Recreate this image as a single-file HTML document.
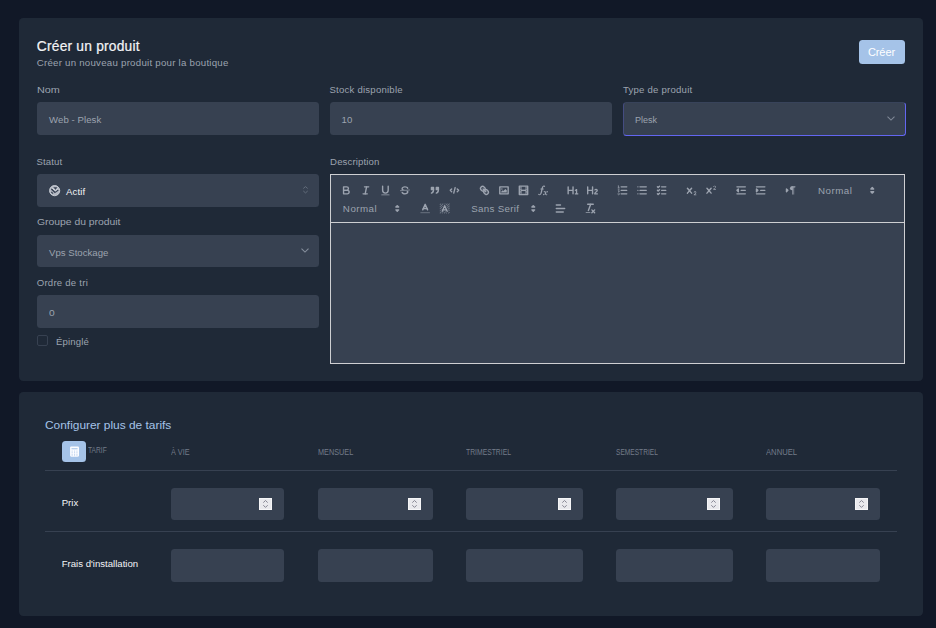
<!DOCTYPE html>
<html lang="fr">
<head>
<meta charset="utf-8">
<title>Créer un produit</title>
<style>
*{box-sizing:border-box;margin:0;padding:0}
html,body{width:936px;height:628px;overflow:hidden;background:#111827;font-family:"Liberation Sans",sans-serif;}
body{position:relative}
.card{position:absolute;background:#1f2937;border-radius:4.2px}
.inp{position:absolute;background:#374151;border-radius:3.5px}
.t{position:absolute;white-space:nowrap;line-height:1;font-family:"Liberation Sans",sans-serif}
.lbl{color:#9ca3af;font-size:10px}
.val{color:#9ca3af;font-size:10px}
.th{color:#6b7280;font-size:8.2px}
.hl{position:absolute;height:1px;background:#374151}
.spin{position:absolute;width:13px;height:12px;background:#e9e9ed;border:1px solid #f5f5f7}
svg{position:absolute;overflow:visible}
</style>
</head>
<body>

<!-- CARD 1 -->
<div class="card" style="left:19px;top:18px;width:904px;height:363px"></div>


<div class="inp" style="left:859px;top:40px;width:46px;height:24px;background:#a5c3e8"></div>

<!-- row 1 -->
<div class="inp" style="left:37px;top:102px;width:282px;height:33px"></div>

<div class="inp" style="left:330px;top:102px;width:282px;height:33px"></div>

<div class="inp" style="left:623px;top:102px;width:283px;height:34px;border:1px solid #6366f1;border-top-color:rgba(99,102,241,.06);border-left-color:rgba(99,102,241,.3)"></div>
<svg style="left:887.3px;top:116px" width="8" height="5" viewBox="0 0 8 5"><path d="M0.5 0.7 L4 4.1 L7.5 0.7" fill="none" stroke="#7f8896" stroke-width="1.1"/></svg>

<!-- left column -->
<div class="inp" style="left:37px;top:174px;width:282px;height:33px"></div>
<svg style="left:48.9px;top:184.9px" width="11.3" height="11.3" viewBox="0 0 11.3 11.3"><circle cx="5.65" cy="5.65" r="5.1" fill="#b4b9c3" stroke="#cdd1d8" stroke-width="0.9"/><path d="M4.2 2.3 L8.3 2.3 L6.6 4.7 Z" fill="#3a4455"/><path d="M2.4 3.9 L5.9 7.3 L9.3 5.0" fill="none" stroke="#3a4455" stroke-width="1.5"/><path d="M2.3 6.9 L4 8.7" fill="none" stroke="#3a4455" stroke-width="1.2"/><path d="M3.3 3.2 L6.6 5.8 L8.7 3.8" fill="none" stroke="#e2e5ea" stroke-width="1"/></svg>
<svg style="left:303.2px;top:186.2px" width="5" height="8" viewBox="0 0 5 8"><path d="M0.3 2.5 L2.5 0.6 L4.7 2.5 M0.3 5.0 L2.5 6.9 L4.7 5.0" fill="none" stroke="#66707f" stroke-width="0.9"/></svg>

<div class="inp" style="left:37px;top:235px;width:282px;height:32px"></div>
<svg style="left:301px;top:248.1px" width="8" height="5" viewBox="0 0 8 5"><path d="M0.5 0.7 L4 4.1 L7.5 0.7" fill="none" stroke="#858e9c" stroke-width="1.1"/></svg>

<div class="inp" style="left:37px;top:295px;width:282px;height:33px"></div>

<div style="position:absolute;left:37px;top:335px;width:11px;height:11px;border:1px solid #374151;border-radius:2px;background:#1f2937"></div>

<!-- description -->
<div id="qlbox" style="position:absolute;left:330px;top:174px;width:575px;height:190px;background:#374151;border:1px solid #cecfd2"></div>
<div style="position:absolute;left:330px;top:222px;width:575px;height:1px;background:#cecfd2"></div>

<!-- QUILL TOOLBAR -->
<style>
#ql{position:absolute;left:331.05px;top:175.05px;width:824px;height:67px;transform:scale(.6975);transform-origin:0 0;padding:10px 8px 0 8px;font-family:"Liberation Sans",sans-serif}
#ql .f{display:block;float:left;margin-right:15px;height:24px;margin-bottom:2px}
#ql .b{float:left;width:28px;height:24px;padding:3px 5px;position:relative}
#ql .b svg{position:static;float:left;height:18px;width:18px;overflow:hidden}
#ql .s{fill:none;stroke:#9ca3af;stroke-width:2;stroke-linecap:round;stroke-linejoin:round}
#ql .s.n{stroke-width:1}
#ql .fl{fill:#9ca3af}
#ql .e{fill-rule:evenodd}
#ql .p{float:left;height:24px;position:relative;color:#9ca3af;font-size:14px;letter-spacing:.42px;font-weight:400;line-height:24px;padding-left:9px;border:0}
#ql .p span{position:relative;top:-.5px}
#ql .p svg{position:absolute;right:3px;top:3px;width:18px;height:18px;overflow:hidden}
#ql .pc{float:left;width:28px;height:24px;padding:3px 5px}
#ql .pc svg{position:static;float:left;width:18px;height:18px;overflow:hidden}
</style>
<div id="ql">
<span class="f">
<span class="b"><svg viewBox="0 0 18 18"><path class="s" d="M5,4H9.5A2.5,2.5,0,0,1,12,6.5v0A2.5,2.5,0,0,1,9.5,9H5A0,0,0,0,1,5,9V4A0,0,0,0,1,5,4Z"/><path class="s" d="M5,9h5.5A2.5,2.5,0,0,1,13,11.5v0A2.5,2.5,0,0,1,10.5,14H5a0,0,0,0,1,0,0V9A0,0,0,0,1,5,9Z"/></svg></span>
<span class="b"><svg viewBox="0 0 18 18"><line class="s" x1="7" x2="13" y1="4" y2="4"/><line class="s" x1="5" x2="11" y1="14" y2="14"/><line class="s" x1="8" x2="10" y1="14" y2="4"/></svg></span>
<span class="b"><svg viewBox="0 0 18 18"><path class="s" d="M5,3V9a4.012,4.012,0,0,0,4,4H9a4.012,4.012,0,0,0,4-4V3"/><rect class="fl" height="1" rx="0.5" ry="0.5" width="12" x="3" y="15"/></svg></span>
<span class="b"><svg viewBox="0 0 18 18"><line class="s n" x1="15.5" x2="2.5" y1="8.5" y2="9.5"/><path class="fl" d="M9.007,8C6.542,7.791,6,7.519,6,6.5,6,5.792,7.283,5,9,5c1.571,0,2.765.679,2.969,1.309a1,1,0,0,0,1.9-.617C13.356,4.106,11.354,3,9,3,6.2,3,4,4.538,4,6.5a3.2,3.2,0,0,0,.5,1.843Z"/><path class="fl" d="M8.984,10C11.457,10.208,12,10.479,12,11.5c0,0.708-1.283,1.5-3,1.5-1.571,0-2.765-.679-2.969-1.309a1,1,0,1,0-1.9.617C4.644,13.894,6.646,15,9,15c2.8,0,5-1.538,5-3.5a3.2,3.2,0,0,0-.5-1.843Z"/></svg></span>
</span><span class="f">
<span class="b"><svg viewBox="0 0 18 18"><rect class="fl s" height="3" width="3" x="4" y="5"/><rect class="fl s" height="3" width="3" x="11" y="5"/><path class="e fl s" d="M7,8c0,4.031-3,5-3,5"/><path class="e fl s" d="M14,8c0,4.031-3,5-3,5"/></svg></span>
<span class="b"><svg viewBox="0 0 18 18"><polyline class="e s" points="5 7 3 9 5 11"/><polyline class="e s" points="13 7 15 9 13 11"/><line class="s" x1="10" x2="8" y1="5" y2="13"/></svg></span>
</span><span class="f">
<span class="b"><svg viewBox="0 0 18 18"><line class="s" x1="7" x2="11" y1="7" y2="11"/><path class="e s" d="M8.9,4.577a3.476,3.476,0,0,1,.36,4.679A3.476,3.476,0,0,1,4.577,8.9C3.185,7.5,2.035,6.4,4.217,4.217S7.5,3.185,8.9,4.577Z"/><path class="e s" d="M13.423,9.1a3.476,3.476,0,0,0-4.679-.36,3.476,3.476,0,0,0,.36,4.679c1.392,1.392,2.5,2.542,4.679.36S14.815,10.5,13.423,9.1Z"/></svg></span>
<span class="b"><svg viewBox="0 0 18 18"><rect class="s" height="10" width="12" x="3" y="4"/><circle class="fl" cx="6" cy="7" r="1"/><polyline class="e fl" points="5 12 5 11 7 9 8 10 11 7 13 9 13 12 5 12"/></svg></span>
<span class="b"><svg viewBox="0 0 18 18"><rect class="s" height="12" width="12" x="3" y="3"/><rect class="fl" height="12" width="1" x="5" y="3"/><rect class="fl" height="12" width="1" x="12" y="3"/><rect class="fl" height="2" width="8" x="5" y="8"/><rect class="fl" height="1" width="3" x="3" y="5"/><rect class="fl" height="1" width="3" x="3" y="7"/><rect class="fl" height="1" width="3" x="3" y="10"/><rect class="fl" height="1" width="3" x="3" y="12"/><rect class="fl" height="1" width="3" x="12" y="5"/><rect class="fl" height="1" width="3" x="12" y="7"/><rect class="fl" height="1" width="3" x="12" y="10"/><rect class="fl" height="1" width="3" x="12" y="12"/></svg></span>
<span class="b"><svg viewBox="0 0 18 18"><path class="fl" d="M11.759,2.482a2.561,2.561,0,0,0-3.53.607A7.656,7.656,0,0,0,6.8,6.2C6.109,9.188,5.275,14.677,4.15,14.927a1.545,1.545,0,0,0-1.3-.933A0.922,0.922,0,0,0,2,15.036S1.954,16,4.119,16s3.091-2.691,3.7-5.553c0.177-.826.36-1.726,0.554-2.6L8.775,6.2c0.381-1.421.807-2.521,1.306-2.676a1.014,1.014,0,0,0,1.02.56A0.966,0.966,0,0,0,11.759,2.482Z"/><rect class="fl" height="1.6" rx="0.8" ry="0.8" width="5" x="5.15" y="6.2"/><path class="fl" d="M13.663,12.027a1.662,1.662,0,0,1,.266-0.276q0.193,0.069.456,0.138a2.1,2.1,0,0,0,.535.069,1.075,1.075,0,0,0,.767-0.3,1.044,1.044,0,0,0,.314-0.8,0.84,0.84,0,0,0-.238-0.619,0.8,0.8,0,0,0-.594-0.239,1.154,1.154,0,0,0-.781.3,4.607,4.607,0,0,0-.781,1q-0.091.15-.218,0.346l-0.246.38c-0.068-.288-0.137-0.582-0.212-0.885-0.459-1.847-2.494-.984-2.941-0.8-0.482.2-.353,0.647-0.094,0.529a0.869,0.869,0,0,1,1.281.585c0.217,0.751.377,1.436,0.527,2.038a5.688,5.688,0,0,1-.362.467,2.69,2.69,0,0,1-.264.271q-0.221-.08-0.471-0.147a2.029,2.029,0,0,0-.522-0.066,1.079,1.079,0,0,0-.768.3A1.058,1.058,0,0,0,9,15.131a0.82,0.82,0,0,0,.832.852,1.134,1.134,0,0,0,.787-0.3,5.11,5.11,0,0,0,.776-0.993q0.141-.219.215-0.34c0.046-.076.122-0.194,0.223-0.346a2.786,2.786,0,0,0,.918,1.726,2.582,2.582,0,0,0,2.376-.185c0.317-.181.212-0.565,0-0.494A0.807,0.807,0,0,1,14.176,15a5.159,5.159,0,0,1-.913-2.446l0,0Q13.487,12.24,13.663,12.027Z"/></svg></span>
</span><span class="f">
<span class="b"><svg viewBox="0 0 18 18"><path class="fl" d="M10,4V14a1,1,0,0,1-2,0V10H3v4a1,1,0,0,1-2,0V4A1,1,0,0,1,3,4V8H8V4a1,1,0,0,1,2,0Zm6.06787,9.209H14.98975V7.59863a.54085.54085,0,0,0-.605-.60547h-.62744a1.01119,1.01119,0,0,0-.748.29688L11.645,8.56641a.5435.5435,0,0,0-.022.8584l.28613.30762a.53861.53861,0,0,0,.84717.0332l.09912-.08789a1.2137,1.2137,0,0,0,.2417-.35254h.02246s-.01123.30859-.01123.60547V13.209H12.041a.54085.54085,0,0,0-.605.60547v.43945a.54085.54085,0,0,0,.605.60547h4.02686a.54085.54085,0,0,0,.605-.60547v-.43945A.54085.54085,0,0,0,16.06787,13.209Z"/></svg></span>
<span class="b"><svg viewBox="0 0 18 18"><path class="fl" d="M16.73975,13.81445v.43945a.54085.54085,0,0,1-.605.60547H11.855a.58392.58392,0,0,1-.64893-.60547V14.0127c0-2.90527,3.39941-3.42187,3.39941-4.55469a.77675.77675,0,0,0-.84717-.78125,1.17684,1.17684,0,0,0-.83594.38477c-.2749.26367-.561.374-.85791.13184l-.4292-.34082c-.30811-.24219-.38525-.51758-.1543-.81445a2.97155,2.97155,0,0,1,2.45361-1.17676,2.45393,2.45393,0,0,1,2.68408,2.40918c0,2.45312-3.1792,2.92676-3.27832,3.93848h2.79443A.54085.54085,0,0,1,16.73975,13.81445ZM9,3A.99974.99974,0,0,0,8,4V8H3V4A1,1,0,0,0,1,4V14a1,1,0,0,0,2,0V10H8v4a1,1,0,0,0,2,0V4A.99974.99974,0,0,0,9,3Z"/></svg></span>
</span><span class="f">
<span class="b"><svg viewBox="0 0 18 18"><line class="s" x1="7" x2="15" y1="4" y2="4"/><line class="s" x1="7" x2="15" y1="9" y2="9"/><line class="s" x1="7" x2="15" y1="14" y2="14"/><line class="s n" x1="2.5" x2="4.5" y1="5.5" y2="5.5"/><path class="fl" d="M3.5,6A0.5,0.5,0,0,1,3,5.5V3.085l-0.276.138A0.5,0.5,0,0,1,2.053,3c-0.124-.247-0.023-0.324.224-0.447l1-.5A0.5,0.5,0,0,1,4,2.5v3A0.5,0.5,0,0,1,3.5,6Z"/><path class="s n" d="M4.5,10.5h-2c0-.234,1.85-1.076,1.85-2.234A0.959,0.959,0,0,0,2.5,8.156"/><path class="s n" d="M2.5,14.846a0.959,0.959,0,0,0,1.85-.109A0.7,0.7,0,0,0,3.75,14a0.688,0.688,0,0,0,.6-0.736,0.959,0.959,0,0,0-1.85-.109"/></svg></span>
<span class="b"><svg viewBox="0 0 18 18"><line class="s" x1="6" x2="15" y1="4" y2="4"/><line class="s" x1="6" x2="15" y1="9" y2="9"/><line class="s" x1="6" x2="15" y1="14" y2="14"/><line class="s" x1="3" x2="3" y1="4" y2="4"/><line class="s" x1="3" x2="3" y1="9" y2="9"/><line class="s" x1="3" x2="3" y1="14" y2="14"/></svg></span>
<span class="b"><svg viewBox="0 0 18 18"><line class="s" x1="9" x2="15" y1="4" y2="4"/><polyline class="s" points="3 4 4 5 6 3"/><line class="s" x1="9" x2="15" y1="14" y2="14"/><polyline class="s" points="3 14 4 15 6 13"/><line class="s" x1="9" x2="15" y1="9" y2="9"/><polyline class="s" points="3 9 4 10 6 8"/></svg></span>
</span><span class="f">
<span class="b"><svg viewBox="0 0 18 18"><path class="fl" d="M15.5,15H13.861a3.858,3.858,0,0,0,1.914-2.975,1.8,1.8,0,0,0-1.6-1.751A1.921,1.921,0,0,0,12.021,11.7a0.50013,0.50013,0,1,0,.957.291h0a0.914,0.914,0,0,1,1.053-.725,0.81,0.81,0,0,1,.744.762c0,1.076-1.16971,1.86982-1.93971,2.43082A1.45639,1.45639,0,0,0,12,15.5a0.5,0.5,0,0,0,.5.5h3A0.5,0.5,0,0,0,15.5,15Z"/><path class="fl" d="M9.65,5.241a1,1,0,0,0-1.409.108L6,7.964,3.759,5.349A1,1,0,0,0,2.192,6.59178Q2.21541,6.6213,2.241,6.649L4.684,9.5,2.241,12.35A1,1,0,0,0,3.71,13.70722q0.02557-.02768.049-0.05722L6,11.036,8.241,13.65a1,1,0,1,0,1.567-1.24277Q9.78459,12.3777,9.759,12.35L7.316,9.5,9.759,6.651A1,1,0,0,0,9.65,5.241Z"/></svg></span>
<span class="b"><svg viewBox="0 0 18 18"><path class="fl" d="M15.5,7H13.861a4.015,4.015,0,0,0,1.914-2.975,1.8,1.8,0,0,0-1.6-1.751A1.922,1.922,0,0,0,12.021,3.7a0.5,0.5,0,1,0,.957.291,0.917,0.917,0,0,1,1.053-.725,0.81,0.81,0,0,1,.744.762c0,1.077-1.164,1.925-1.934,2.486A1.423,1.423,0,0,0,12,7.5a0.5,0.5,0,0,0,.5.5h3A0.5,0.5,0,0,0,15.5,7Z"/><path class="fl" d="M9.651,5.241a1,1,0,0,0-1.41.108L6,7.964,3.759,5.349a1,1,0,1,0-1.519,1.3L4.683,9.5,2.241,12.35a1,1,0,1,0,1.519,1.3L6,11.036,8.241,13.65a1,1,0,0,0,1.519-1.3L7.317,9.5,9.759,6.651A1,1,0,0,0,9.651,5.241Z"/></svg></span>
</span><span class="f">
<span class="b"><svg viewBox="0 0 18 18"><line class="s" x1="3" x2="15" y1="14" y2="14"/><line class="s" x1="3" x2="15" y1="4" y2="4"/><line class="s" x1="9" x2="15" y1="9" y2="9"/><polyline class="s" points="5 7 5 11 3 9 5 7"/></svg></span>
<span class="b"><svg viewBox="0 0 18 18"><line class="s" x1="3" x2="15" y1="14" y2="14"/><line class="s" x1="3" x2="15" y1="4" y2="4"/><line class="s" x1="9" x2="15" y1="9" y2="9"/><polyline class="fl s" points="3 7 3 11 5 9 3 7"/></svg></span>
</span><span class="f">
<span class="b"><svg viewBox="0 0 18 18"><polygon class="s fl" points="3 11 5 9 3 7 3 11"/><line class="s fl" x1="15" x2="11" y1="4" y2="4"/><path class="fl" d="M11,3a3,3,0,0,0,0,6h1V3H11Z"/><rect class="fl" height="11" width="1" x="11" y="4"/><rect class="fl" height="11" width="1" x="13" y="4"/></svg></span>
</span><span class="f">
<span class="p" style="width:98px;margin-left:1.3px"><span id="q1" style="letter-spacing:.68px">Normal</span><svg style="right:2.6px" viewBox="0 0 18 18"><polygon class="s" points="7 11 9 13 11 11 7 11"/><polygon class="s" points="7 7 9 5 11 7 7 7"/></svg></span>
</span><span class="f">
<span class="p" style="width:98px"><span id="q2" style="letter-spacing:.68px">Normal</span><svg style="right:2.2px" viewBox="0 0 18 18"><polygon class="s" points="7 11 9 13 11 11 7 11"/><polygon class="s" points="7 7 9 5 11 7 7 7"/></svg></span>
</span><span class="f">
<span class="pc"><svg viewBox="0 0 18 18"><line class="s" style="opacity:.4" x1="3" x2="15" y1="15" y2="15"/><polyline class="s" points="5.5 11 9 3 12.5 11"/><line class="s" x1="11.63" x2="6.38" y1="9" y2="9"/></svg></span>
<span class="pc"><svg viewBox="0 0 18 18"><g class="fl"><polygon points="6 6.868 6 6 5 6 5 7 5.942 7 6 6.868"/><rect height="1" width="1" x="4" y="4"/><polygon points="6.817 5 6 5 6 6 6.38 6 6.817 5"/><rect height="1" width="1" x="2" y="6"/><rect height="1" width="1" x="3" y="5"/><rect height="1" width="1" x="4" y="7"/><polygon points="4 11.439 4 11 3 11 3 12 3.755 12 4 11.439"/><rect height="1" width="1" x="2" y="12"/><rect height="1" width="1" x="2" y="9"/><rect height="1" width="1" x="2" y="15"/><polygon points="4.63 10 4 10 4 11 4.192 11 4.63 10"/><rect height="1" width="1" x="3" y="8"/><path d="M10.832,4.2L11,4.582V4H10.708A1.948,1.948,0,0,1,10.832,4.2Z"/><path d="M7,4.582L7.168,4.2A1.929,1.929,0,0,1,7.292,4H7V4.582Z"/><path d="M8,13H7.683l-0.351.8a1.933,1.933,0,0,1-.124.2H8V13Z"/><rect height="1" width="1" x="12" y="2"/><rect height="1" width="1" x="11" y="3"/><path d="M9,3H8V3.282A1.985,1.985,0,0,1,9,3Z"/><rect height="1" width="1" x="2" y="3"/><rect height="1" width="1" x="6" y="2"/><rect height="1" width="1" x="3" y="2"/><rect height="1" width="1" x="5" y="3"/><rect height="1" width="1" x="9" y="2"/><rect height="1" width="1" x="15" y="14"/><polygon points="13.447 10.174 13.469 10.225 13.472 10.232 13.808 11 14 11 14 10 13.37 10 13.447 10.174"/><rect height="1" width="1" x="13" y="7"/><rect height="1" width="1" x="15" y="5"/><rect height="1" width="1" x="14" y="6"/><rect height="1" width="1" x="15" y="8"/><rect height="1" width="1" x="14" y="9"/><path d="M3.775,14H3v1H4V14.314A1.97,1.97,0,0,1,3.775,14Z"/><rect height="1" width="1" x="14" y="3"/><polygon points="12 6.868 12 6 11.62 6 12 6.868"/><rect height="1" width="1" x="15" y="2"/><rect height="1" width="1" x="12" y="5"/><rect height="1" width="1" x="13" y="4"/><polygon points="12.933 9 13 9 13 8 12.495 8 12.933 9"/><rect height="1" width="1" x="9" y="14"/><rect height="1" width="1" x="8" y="15"/><path d="M6,14.926V15H7V14.316A1.993,1.993,0,0,1,6,14.926Z"/><rect height="1" width="1" x="5" y="15"/><path d="M10.668,13.8L10.317,13H10v1h0.792A1.947,1.947,0,0,1,10.668,13.8Z"/><rect height="1" width="1" x="11" y="15"/><path d="M14.332,12.2a1.99,1.99,0,0,1,.166.8H15V12H14.245Z"/><rect height="1" width="1" x="14" y="15"/><rect height="1" width="1" x="15" y="11"/></g><polyline class="s" points="5.5 13 9 5 12.5 13"/><line class="s" x1="11.63" x2="6.38" y1="11" y2="11"/></svg></span>
</span><span class="f">
<span class="p" style="width:108px"><span id="q3">Sans Serif</span><svg style="right:1px" viewBox="0 0 18 18"><polygon class="s" points="7 11 9 13 11 11 7 11"/><polygon class="s" points="7 7 9 5 11 7 7 7"/></svg></span>
</span><span class="f">
<span class="pc"><svg viewBox="0 0 18 18"><line class="s" x1="3" x2="15" y1="9" y2="9"/><line class="s" x1="3" x2="13" y1="14" y2="14"/><line class="s" x1="3" x2="9" y1="4" y2="4"/></svg></span>
</span><span class="f">
<span class="b"><svg viewBox="0 0 18 18"><line class="s" x1="5" x2="13" y1="3" y2="3"/><line class="s" x1="6" x2="9.35" y1="12" y2="3"/><line class="s" x1="11" x2="15" y1="11" y2="15"/><line class="s" x1="15" x2="11" y1="11" y2="15"/><rect class="fl" height="1" rx="0.5" ry="0.5" width="7" x="2" y="14"/></svg></span>
</span>
</div>

<!-- CARD 2 -->
<div class="card" style="left:19px;top:392px;width:904px;height:224px"></div>

<div class="inp" style="left:62px;top:441px;width:24px;height:21px;background:#a5c3e8"></div>

<div class="hl" style="left:45px;top:470px;width:852px"></div>
<div class="hl" style="left:45px;top:531px;width:852px"></div>


<div class="inp" style="left:171px;top:488px;width:113px;height:32px"></div>
<div class="inp" style="left:318px;top:488px;width:115px;height:32px"></div>
<div class="inp" style="left:466px;top:488px;width:117px;height:32px"></div>
<div class="inp" style="left:616px;top:488px;width:117px;height:32px"></div>
<div class="inp" style="left:766px;top:488px;width:114px;height:32px"></div>

<div class="inp" style="left:171px;top:549px;width:113px;height:33px"></div>
<div class="inp" style="left:318px;top:549px;width:115px;height:33px"></div>
<div class="inp" style="left:466px;top:549px;width:117px;height:33px"></div>
<div class="inp" style="left:616px;top:549px;width:117px;height:33px"></div>
<div class="inp" style="left:766px;top:549px;width:114px;height:33px"></div>

<div class="spin" style="left:259px;top:498px"></div><svg style="left:259px;top:498px" width="13" height="12" viewBox="0 0 13 12"><path d="M4.3 4.6 L6.5 2.5 L8.7 4.6 M4.3 7.2 L6.5 9.4 L8.7 7.2" fill="none" stroke="#80808e" stroke-width="0.95"/></svg>
<div class="spin" style="left:408px;top:498px"></div><svg style="left:408px;top:498px" width="13" height="12" viewBox="0 0 13 12"><path d="M4.3 4.6 L6.5 2.5 L8.7 4.6 M4.3 7.2 L6.5 9.4 L8.7 7.2" fill="none" stroke="#80808e" stroke-width="0.95"/></svg>
<div class="spin" style="left:558px;top:498px"></div><svg style="left:558px;top:498px" width="13" height="12" viewBox="0 0 13 12"><path d="M4.3 4.6 L6.5 2.5 L8.7 4.6 M4.3 7.2 L6.5 9.4 L8.7 7.2" fill="none" stroke="#80808e" stroke-width="0.95"/></svg>
<div class="spin" style="left:707px;top:498px"></div><svg style="left:707px;top:498px" width="13" height="12" viewBox="0 0 13 12"><path d="M4.3 4.6 L6.5 2.5 L8.7 4.6 M4.3 7.2 L6.5 9.4 L8.7 7.2" fill="none" stroke="#80808e" stroke-width="0.95"/></svg>
<div class="spin" style="left:855px;top:498px"></div><svg style="left:855px;top:498px" width="13" height="12" viewBox="0 0 13 12"><path d="M4.3 4.6 L6.5 2.5 L8.7 4.6 M4.3 7.2 L6.5 9.4 L8.7 7.2" fill="none" stroke="#80808e" stroke-width="0.95"/></svg>
<svg style="left:69px;top:446.4px" width="11" height="11" viewBox="0 0 11 11"><rect x="1.1" y="0.5" width="8.9" height="10.2" rx="1.1" fill="#fdfdff"/><rect x="2.5" y="2.1" width="6.1" height="1.2" fill="#a5c3e8" opacity=".85"/><g fill="#a5c3e8" opacity=".7"><rect x="2.6" y="4.6" width="1.1" height="1"/><rect x="5" y="4.6" width="1.1" height="1"/><rect x="7.4" y="4.6" width="1.1" height="1"/><rect x="2.6" y="6.2" width="1.1" height="1"/><rect x="5" y="6.2" width="1.1" height="1"/><rect x="7.4" y="6.2" width="1.1" height="1"/><rect x="2.6" y="7.8" width="1.1" height="1"/><rect x="5" y="7.8" width="1.1" height="1"/><rect x="7.4" y="7.8" width="1.1" height="1"/><rect x="2.6" y="9.3" width="1.1" height=".8"/><rect x="5" y="9.3" width="1.1" height=".8"/><rect x="7.4" y="9.3" width="1.1" height=".8"/></g></svg>
<!-- TEXTS -->
<div class="t" id="t1" style="left:36.8px;top:39.72px;font-size:13.8px;color:#f3f4f6;letter-spacing:0.206px;-webkit-text-stroke:.2px #f3f4f6;">Créer un produit</div>
<div class="t" id="t2" style="left:36.7px;top:58.19px;font-size:9.7px;color:#9ca3af;letter-spacing:0.241px;">Créer un nouveau produit pour la boutique</div>
<div class="t" id="t9" style="left:867.9px;top:46.59px;font-size:11.0px;color:#ffffff;letter-spacing:-0.079px;">Créer</div>
<div class="t" id="t3" style="left:36.9px;top:84.97px;font-size:9.6px;color:#9ca3af;transform:scaleX(1.1300);transform-origin:0 0;">Nom</div>
<div class="t" id="t4" style="left:49.1px;top:114.77px;font-size:9.6px;color:#9ca3af;letter-spacing:0.055px;">Web - Plesk</div>
<div class="t" id="t5" style="left:329.5px;top:84.97px;font-size:9.6px;color:#9ca3af;letter-spacing:0.215px;">Stock disponible</div>
<div class="t" id="t6" style="left:341.6px;top:114.77px;font-size:9.6px;color:#9ca3af;letter-spacing:0.128px;">10</div>
<div class="t" id="t7" style="left:622.9px;top:84.97px;font-size:9.6px;color:#9ca3af;letter-spacing:0.226px;">Type de produit</div>
<div class="t" id="t8" style="left:635.1px;top:114.77px;font-size:9.6px;color:#9ca3af;transform:scaleX(0.9417);transform-origin:0 0;">Plesk</div>
<div class="t" id="t10" style="left:36.5px;top:156.67px;font-size:9.6px;color:#9ca3af;letter-spacing:0.124px;">Statut</div>
<div class="t" id="t11" style="left:65.9px;top:186.87px;font-size:9.6px;color:#f3f4f6;letter-spacing:0.157px;">Actif</div>
<div class="t" id="t12" style="left:37.2px;top:216.57px;font-size:9.6px;color:#9ca3af;transform:scaleX(1.0796);transform-origin:0 0;">Groupe du produit</div>
<div class="t" id="t13" style="left:49.0px;top:247.57px;font-size:9.6px;color:#9ca3af;letter-spacing:0.018px;">Vps Stockage</div>
<div class="t" id="t14" style="left:36.7px;top:277.77px;font-size:9.6px;color:#9ca3af;letter-spacing:0.234px;">Ordre de tri</div>
<div class="t" id="t15" style="left:48.7px;top:307.77px;font-size:9.6px;color:#9ca3af;transform:scaleX(1.0667);transform-origin:0 0;">0</div>
<div class="t" id="t16" style="left:55.9px;top:336.67px;font-size:9.6px;color:#9ca3af;letter-spacing:0.147px;">Épinglé</div>
<div class="t" id="t17" style="left:330.1px;top:156.57px;font-size:9.6px;color:#9ca3af;letter-spacing:0.130px;">Description</div>
<div class="t" id="t18" style="left:44.6px;top:420.29px;font-size:11.0px;color:#a5c3e8;transform:scaleX(1.0815);transform-origin:0 0;">Configurer plus de tarifs</div>
<div class="t" id="t19" style="left:88.4px;top:447.06px;font-size:8.2px;color:#737b89;transform:scaleX(0.8114);transform-origin:0 0;">TARIF</div>
<div class="t" id="t20" style="left:170.5px;top:449.06px;font-size:8.2px;color:#737b89;transform:scaleX(0.8884);transform-origin:0 0;">À VIE</div>
<div class="t" id="t21" style="left:318.3px;top:449.06px;font-size:8.2px;color:#737b89;transform:scaleX(0.8916);transform-origin:0 0;">MENSUEL</div>
<div class="t" id="t22" style="left:465.8px;top:449.06px;font-size:8.2px;color:#737b89;transform:scaleX(0.8312);transform-origin:0 0;">TRIMESTRIEL</div>
<div class="t" id="t23" style="left:616.3px;top:449.06px;font-size:8.2px;color:#737b89;transform:scaleX(0.8058);transform-origin:0 0;">SEMESTRIEL</div>
<div class="t" id="t24" style="left:765.7px;top:449.06px;font-size:8.2px;color:#737b89;transform:scaleX(0.9362);transform-origin:0 0;">ANNUEL</div>
<div class="t" id="t25" style="left:61.7px;top:497.67px;font-size:9.6px;color:#f3f4f6;letter-spacing:-0.010px;">Prix</div>
<div class="t" id="t26" style="left:61.7px;top:558.57px;font-size:9.6px;color:#f3f4f6;letter-spacing:-0.004px;">Frais d'installation</div>
<!-- /TEXTS -->
</body>
</html>
